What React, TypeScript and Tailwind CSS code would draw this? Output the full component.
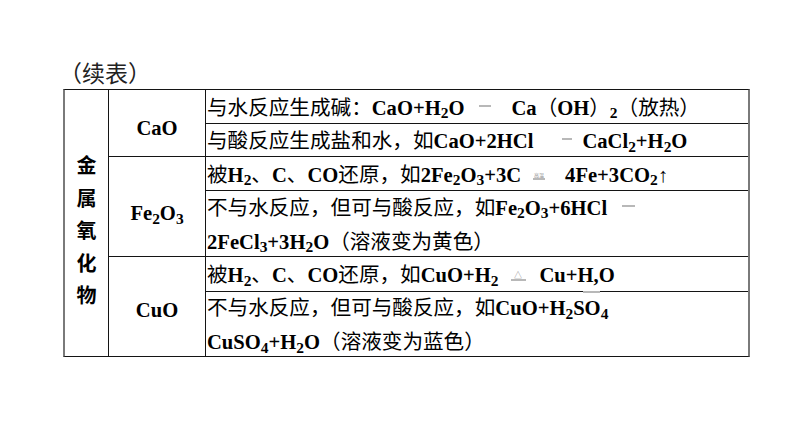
import React from "react";

function F({ children }: { children: React.ReactNode }) {
  return <span className="font-['Liberation_Serif',serif] font-bold">{children}</span>;
}

function Eq({ className, label }: { className: string; label?: React.ReactNode }) {
  return (
    <span className={"inline-flex flex-col items-center align-middle " + className}>
      {label}
      <span className="block h-[2px] w-full bg-[#b8b8b8]" />
    </span>
  );
}

function Cell3({ row, children }: { row: string; children: React.ReactNode }) {
  return (
    <div className={"col-start-3 bg-white flex items-center pl-[1px] leading-[32px] " + row}>
      <div>{children}</div>
    </div>
  );
}

export default function App() {
  return (
    <div className="w-[794px] h-[447px] bg-white text-black font-['Noto_Sans_CJK_SC',sans-serif] flex flex-col pt-[56px]">
      <div className="h-[32px] leading-[32px] pl-[59px] text-[23px] text-[#222]">（续表）</div>
      <div className="mt-[1px] ml-[63px] w-fit grid grid-cols-[43px_96px_542px] grid-rows-[33px_32px_33px_65px_34px_64px] gap-px bg-[#141414] border-t border-b border-t-[#141414] border-b-[#141414] border-l-2 border-r-2 border-l-[#7a7a7a] border-r-[#7a7a7a] text-[20.6px]">
        <div className="col-start-1 row-start-1 row-span-6 bg-white flex flex-col items-center pt-[59px] leading-[32.5px] font-bold text-[20px]">
          <span>金</span>
          <span>属</span>
          <span>氧</span>
          <span>化</span>
          <span>物</span>
        </div>

        <div className="col-start-2 row-start-1 row-span-2 bg-white flex items-center justify-center pt-[10px]">
          <F>CaO</F>
        </div>
        <Cell3 row="row-start-1">
          与水反应生成碱：<F>CaO+H<sub>2</sub>O</F>
          <Eq className="ml-[15px] w-[12px] mr-[20px] mb-[6px]" />
          <F>Ca</F>（<F>OH</F>）<F><sub>2</sub></F>（放热）
        </Cell3>
        <Cell3 row="row-start-2">
          与酸反应生成盐和水，如<F>CaO+2HCl</F>
          <Eq className="ml-[29px] w-[10px] mr-[10px] mb-[6px]" />
          <F>CaCl<sub>2</sub>+H<sub>2</sub>O</F>
        </Cell3>

        <div className="col-start-2 row-start-3 row-span-2 bg-white flex items-center justify-center pt-[14px]">
          <F>Fe<sub>2</sub>O<sub>3</sub></F>
        </div>
        <Cell3 row="row-start-3">
          被<F>H<sub>2</sub></F>、<F>C</F>、<F>CO</F>还原，如<F>2Fe<sub>2</sub>O<sub>3</sub>+3C</F>
          <Eq
            className="ml-[12px] w-[12px] mr-[20px]"
            label={<span className="block text-[5px] leading-[6px] text-[#8a8a8a]">高温</span>}
          />
          <F>4Fe+3CO<sub>2</sub>↑</F>
        </Cell3>
        <Cell3 row="row-start-4">
          <div>
            不与水反应，但可与酸反应，如<F>Fe<sub>2</sub>O<sub>3</sub>+6HCl</F>
            <Eq className="ml-[15px] w-[13px] mb-[6px]" />
          </div>
          <div>
            <F>2FeCl<sub>3</sub>+3H<sub>2</sub>O</F>（溶液变为黄色）
          </div>
        </Cell3>

        <div className="col-start-2 row-start-5 row-span-2 bg-white flex items-center justify-center pt-[8px]">
          <F>CuO</F>
        </div>
        <Cell3 row="row-start-5">
          被<F>H<sub>2</sub></F>、<F>C</F>、<F>CO</F>还原，如<F>CuO+H<sub>2</sub></F>
          <Eq
            className="ml-[12px] w-[15px] mr-[14px]"
            label={<span className="block text-[8px] leading-[8px] text-[#8a8a8a]">△</span>}
          />
          <F>
            Cu+
            <span className="relative">
              H,
              <span className="absolute left-[5px] top-[27px] h-[2px] w-[17px] bg-[#b8b8b8]" />
            </span>
            O
          </F>
        </Cell3>
        <Cell3 row="row-start-6">
          <div>
            不与水反应，但可与酸反应，如<F>CuO+H<sub>2</sub>SO<sub>4</sub></F>
          </div>
          <div>
            <F>CuSO<sub>4</sub>+H<sub>2</sub>O</F>（溶液变为蓝色）
          </div>
        </Cell3>
      </div>
    </div>
  );
}
